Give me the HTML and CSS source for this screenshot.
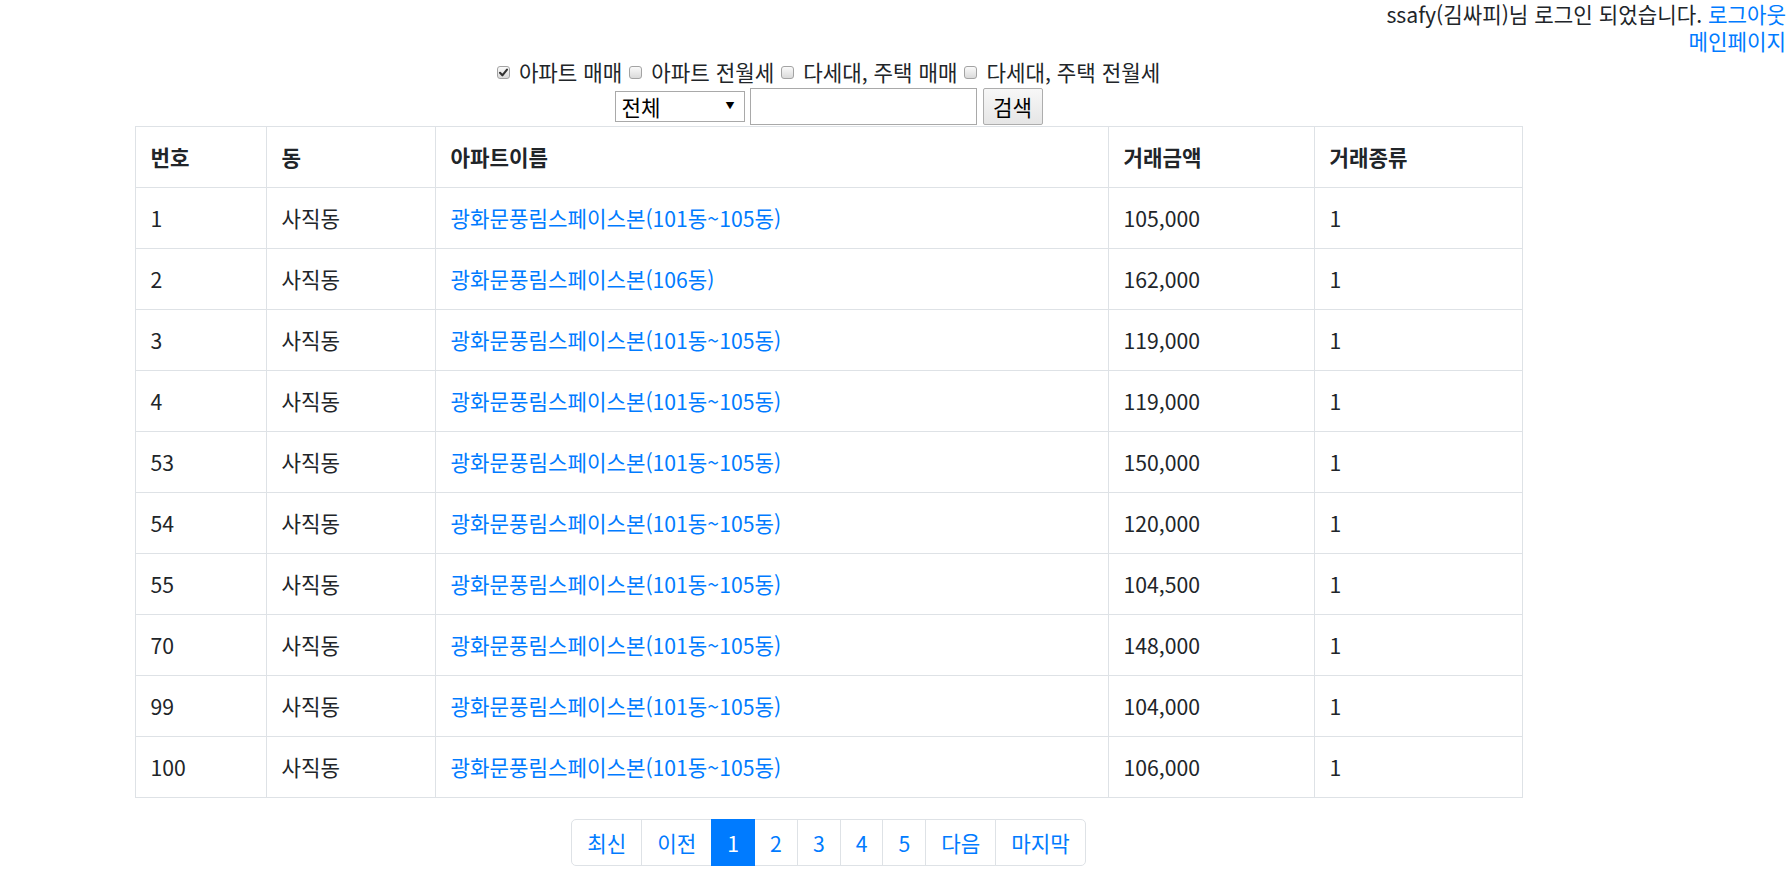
FILE: index.html
```html
<!DOCTYPE html>
<html lang="ko">
<head>
<meta charset="utf-8">
<title>아파트 거래 정보</title>
<link rel="stylesheet" href="styles.css">
</head>
<body>
<header class="topbar">
  <div class="topbar-line">ssafy(김싸피)님 로그인 되었습니다. <a href="#">로그아웃</a></div>
  <div class="topbar-line"><a href="#">메인페이지</a></div>
</header>
<main class="main">
  <div class="filters">
    <label class="opt"><span class="cb"><svg viewBox="0 0 13 13" width="13" height="13"><path d="M3 6.8 L5.4 9.3 L10 3.6" fill="none" stroke="#333" stroke-width="2.1" stroke-linecap="round" stroke-linejoin="round"/></svg></span>아파트 매매</label>
    <label class="opt"><span class="cb"></span>아파트 전월세</label>
    <label class="opt"><span class="cb"></span>다세대, 주택 매매</label>
    <label class="opt"><span class="cb"></span>다세대, 주택 전월세</label>
  </div>
  <form class="search">
    <div class="select-wrap">
      <select class="select"><option>전체</option></select>
      <span class="select-arrow">▼</span>
    </div>
    <input class="query" type="text">
    <button class="btn" type="button">검색</button>
  </form>
  <table class="deals">
    <thead>
      <tr><th class="c-no">번호</th><th class="c-dong">동</th><th class="c-name">아파트이름</th><th class="c-price">거래금액</th><th class="c-type">거래종류</th></tr>
    </thead>
    <tbody>
      <tr><td>1</td><td>사직동</td><td><a href="#">광화문풍림스페이스본(101동~105동)</a></td><td>105,000</td><td>1</td></tr>
      <tr><td>2</td><td>사직동</td><td><a href="#">광화문풍림스페이스본(106동)</a></td><td>162,000</td><td>1</td></tr>
      <tr><td>3</td><td>사직동</td><td><a href="#">광화문풍림스페이스본(101동~105동)</a></td><td>119,000</td><td>1</td></tr>
      <tr><td>4</td><td>사직동</td><td><a href="#">광화문풍림스페이스본(101동~105동)</a></td><td>119,000</td><td>1</td></tr>
      <tr><td>53</td><td>사직동</td><td><a href="#">광화문풍림스페이스본(101동~105동)</a></td><td>150,000</td><td>1</td></tr>
      <tr><td>54</td><td>사직동</td><td><a href="#">광화문풍림스페이스본(101동~105동)</a></td><td>120,000</td><td>1</td></tr>
      <tr><td>55</td><td>사직동</td><td><a href="#">광화문풍림스페이스본(101동~105동)</a></td><td>104,500</td><td>1</td></tr>
      <tr><td>70</td><td>사직동</td><td><a href="#">광화문풍림스페이스본(101동~105동)</a></td><td>148,000</td><td>1</td></tr>
      <tr><td>99</td><td>사직동</td><td><a href="#">광화문풍림스페이스본(101동~105동)</a></td><td>104,000</td><td>1</td></tr>
      <tr><td>100</td><td>사직동</td><td><a href="#">광화문풍림스페이스본(101동~105동)</a></td><td>106,000</td><td>1</td></tr>
    </tbody>
  </table>
  <nav class="pager">
    <ul class="pagination">
      <li class="page-item"><a class="page-link" href="#">최신</a></li>
      <li class="page-item"><a class="page-link" href="#">이전</a></li>
      <li class="page-item active"><a class="page-link" href="#">1</a></li>
      <li class="page-item"><a class="page-link" href="#">2</a></li>
      <li class="page-item"><a class="page-link" href="#">3</a></li>
      <li class="page-item"><a class="page-link" href="#">4</a></li>
      <li class="page-item"><a class="page-link" href="#">5</a></li>
      <li class="page-item"><a class="page-link" href="#">다음</a></li>
      <li class="page-item"><a class="page-link" href="#">마지막</a></li>
    </ul>
  </nav>
</main>
</body>
</html>
```
FILE: styles.css
```css
* { box-sizing: border-box; }

html, body {
  margin: 0;
  padding: 0;
  background: #fff;
}

body {
  font-family: "Noto Sans CJK KR", "Open Sans", sans-serif;
  font-size: 21.2px;
  color: #212529;
  line-height: 30px;
}

a {
  color: #007bff;
  text-decoration: none;
}

.topbar {
  text-align: right;
  padding-right: 3px;
}

.topbar-line {
  line-height: 27px;
  height: 27px;
}

.main {
  width: 1657px;
}

.filters {
  margin-top: 3px;
  display: flex;
  justify-content: center;
  align-items: center;
  height: 30px;
  gap: 7px;
}

.opt {
  display: flex;
  align-items: center;
}

.cb {
  display: inline-block;
  width: 13px;
  height: 13px;
  margin-right: 9px;
  border: 1px solid #a3a3a3;
  border-radius: 3px;
  background: linear-gradient(#fafafa, #dadada);
  position: relative;
}

.cb svg {
  position: absolute;
  left: -1px;
  top: -1px;
}

.search {
  margin: 1px 0 0;
  display: flex;
  justify-content: center;
  align-items: center;
  height: 37px;
}

.select-wrap {
  position: relative;
  width: 130px;
  height: 31px;
}

.select {
  appearance: none;
  -webkit-appearance: none;
  width: 130px;
  height: 31px;
  margin: 0;
  border: 1px solid #a9a9a9;
  border-radius: 0;
  background: #fff;
  font-family: inherit;
  font-size: 21.2px;
  color: #000;
  padding: 0 0 0 6px;
  line-height: 29px;
}

.select-arrow {
  position: absolute;
  right: 10px;
  top: 10px;
  font-size: 9px;
  line-height: 10px;
  color: #000;
  pointer-events: none;
}

.query {
  width: 227px;
  height: 37px;
  margin: 0 0 0 5px;
  border: 1px solid #a9a9a9;
  background: #fff;
  font-family: inherit;
  font-size: 20px;
  padding: 0 4px;
}

.btn {
  width: 60px;
  height: 37px;
  margin: 0 0 0 6px;
  border: 1px solid #adadad;
  border-radius: 2px;
  background: linear-gradient(#f7f7f7, #e6e6e6);
  font-family: inherit;
  font-size: 21.2px;
  color: #000;
  padding: 0;
  line-height: 35px;
}

.deals {
  margin: 1px auto 0;
  width: 1387px;
  table-layout: fixed;
  border-collapse: collapse;
}

.deals th,
.deals td {
  border: 1px solid #dee2e6;
  padding: 15px;
  line-height: 30px;
  text-align: left;
  vertical-align: top;
  white-space: nowrap;
}

.deals th {
  font-weight: 700;
}

.c-no { width: 131px; }
.c-dong { width: 169px; }
.c-name { width: 673px; }
.c-price { width: 206px; }
.c-type { width: 208px; }

.pager {
  margin-top: 21px;
  display: flex;
  justify-content: center;
}

.pagination {
  display: flex;
  list-style: none;
  margin: 0;
  padding: 0;
}

.page-link {
  display: block;
  padding: 10px 15px;
  line-height: 25px;
  border: 1px solid #dee2e6;
  margin-left: -1px;
  color: #007bff;
  background: #fff;
}

.page-item:first-child .page-link {
  margin-left: 0;
  border-radius: 5px 0 0 5px;
}

.page-item:last-child .page-link {
  border-radius: 0 5px 5px 0;
}

.page-item.active .page-link {
  background: #007bff;
  border-color: #007bff;
  color: #fff;
  position: relative;
}
```
